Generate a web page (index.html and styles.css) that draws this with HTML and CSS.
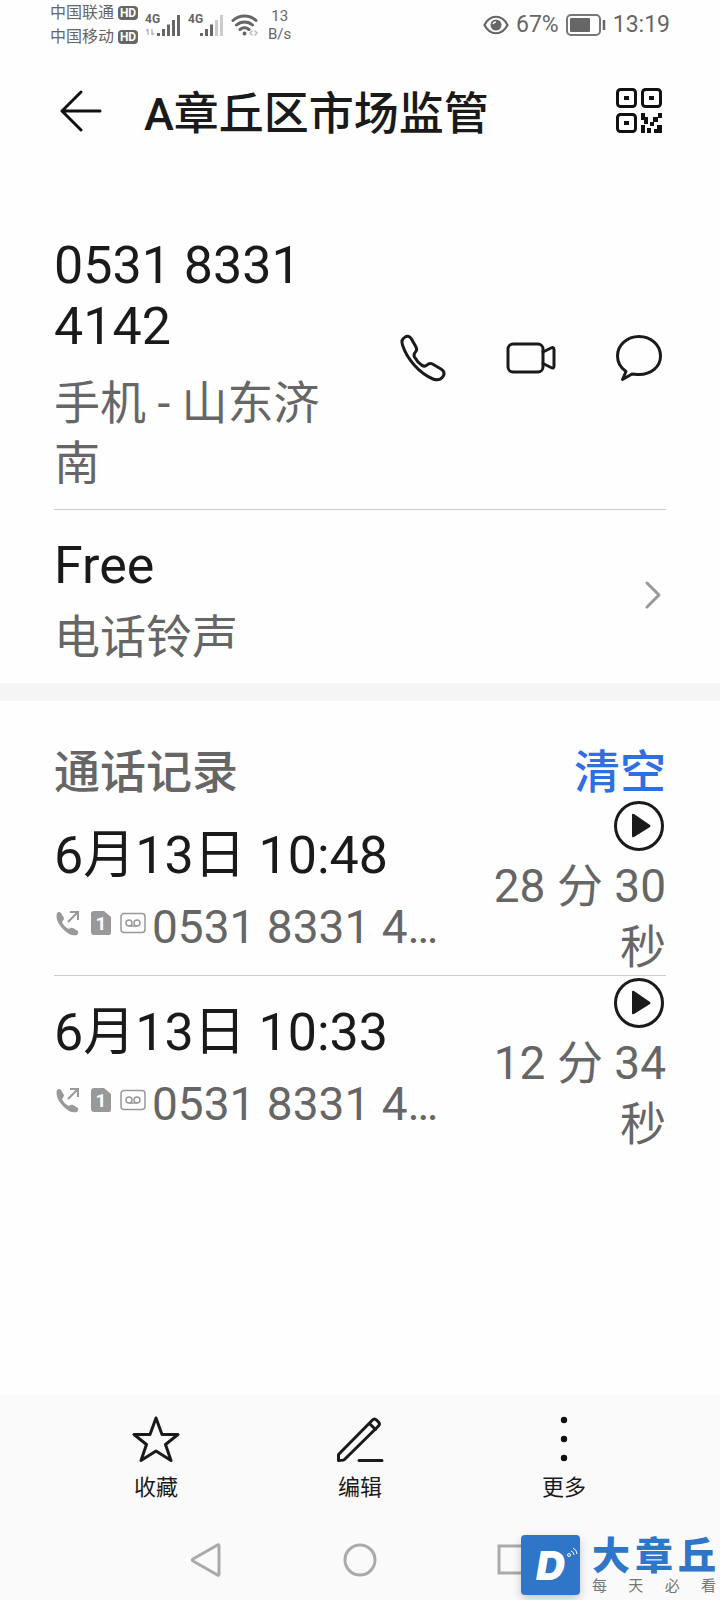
FILE: index.html
```html
<!DOCTYPE html>
<html lang="zh-CN">
<head>
  <meta charset="UTF-8">
  <meta name="viewport" content="width=device-width, initial-scale=1.0">
  <title>A章丘区市场监管</title>
  <link rel="stylesheet" href="styles.css">
</head>
<body>
  <div class="page">

    <div class="status-bar">
      <div class="carriers">
        <div class="carrier">中国联通 <span class="hd">HD</span></div>
        <div class="carrier">中国移动 <span class="hd">HD</span></div>
      </div>
      <svg class="signal" viewBox="0 0 36 26">
        <text x="0" y="11" class="net">4G</text>
        <path d="M3 17v6M1 19l2-2M7 23v-6M9 21l-2 2" stroke="#bbb" stroke-width="1.5" fill="none"/>
        <path d="M13.500 24v-3M18.500 24v-7M23.500 24V12.500M28.500 24V8M33.500 24V3" class="bar-on"/>
      </svg>
      <svg class="signal" viewBox="0 0 36 26">
        <text x="0" y="11" class="net">4G</text>
        <path d="M13.500 24v-3M18.500 24v-7M23.500 24V12.500" class="bar-on"/>
        <path d="M28.500 24V8M33.500 24V3" class="bar-off"/>
      </svg>
      <svg class="wifi" viewBox="0 0 28 26" fill="none" stroke="#666" stroke-width="3" stroke-linecap="round">
        <path d="M2 8.500a17 17 0 0 1 23 0M5.500 13a12 12 0 0 1 16 0M9 17.500a7 7 0 0 1 9 0"/>
        <circle cx="13.500" cy="21.500" r="1" fill="#666" stroke-width="2"/>
        <path d="M21 19l-2 2 2 2M24 19l2 2-2 2" stroke="#bbb" stroke-width="1.500"/>
      </svg>
      <div class="speed">13<br>B/s</div>
      <div class="status-right">
        <svg class="eye" viewBox="0 0 26 20">
          <path d="M1.500 10C7-1 19-1 24.500 10C19 21 7 21 1.500 10z" fill="none" stroke="#666" stroke-width="2.200"/>
          <circle cx="13" cy="10" r="5.500" fill="#666"/>
          <path d="M10 9a3 3 0 0 1 3-2" fill="none" stroke="#fff" stroke-width="1.500"/>
        </svg>
        <span>67%</span>
        <svg class="battery" viewBox="0 0 40 22">
          <rect x="1" y="1" width="33" height="20" rx="4" fill="none" stroke="#777" stroke-width="2"/>
          <rect x="4" y="4" width="20" height="14" rx="1" fill="#666"/>
          <path d="M38 6v10" stroke="#666" stroke-width="2.500"/>
        </svg>
        <span>13:19</span>
      </div>
    </div>

    <header class="title-bar">
      <button class="icon-button" aria-label="返回">
        <svg class="icon-back" viewBox="0 0 42 42">
          <path d="M21 2L2 21l19 19M2 21h38"/>
        </svg>
      </button>
      <h1>A章丘区市场监管</h1>
      <button class="icon-button" aria-label="二维码">
        <svg class="icon-qr" viewBox="0 0 54 54">
          <g fill="none" stroke="#111" stroke-width="3">
            <rect x="5.500" y="5.500" width="18" height="17" rx="3"/>
            <rect x="30.500" y="5.500" width="18" height="17" rx="3"/>
            <rect x="5.500" y="30.500" width="18" height="17" rx="3"/>
          </g>
          <path fill="#111" d="M12 12h5v4h-5zM37 12h5v4h-5zM12 37h5v4h-5zM29 29h4v4h3v7h-4v-4h-3zM46 29h4v5h-4zM41 33h5v5h-5zM38 38h4v4h-4zM45 41h5v8h-8v-4h3zM29 41h4v8h-4zM35 44h4v5h-4z"/>
        </svg>
      </button>
    </header>

    <main>
      <section class="contact">
        <div class="number-row">
          <div class="number-text">
            <div class="primary">0531 8331 4142</div>
            <div class="secondary">手机 - 山东济南</div>
          </div>
          <button class="icon-button" aria-label="拨打电话">
            <svg class="icon-line" viewBox="0 0 54 54">
              <path d="M10 5.500C7 7 5 10 6.500 14C11 28 23 42 37 48C41 49.500 45 48.500 47 45.500C49 42.500 48 40 45 38L36.500 33C34.500 32 32.500 32.500 31 34C29.500 35.500 27.500 35.500 25.500 34C22.500 32 20.500 29.500 18.500 26C17.500 24 18 22.500 19.500 21C21 19.500 21 18 20 16L15.500 8C14 5.500 12.500 4.500 10 5.500z"/>
            </svg>
          </button>
          <button class="icon-button" aria-label="视频通话">
            <svg class="icon-line" viewBox="0 0 54 54">
              <rect x="4" y="13" width="35" height="28" rx="5"/>
              <path d="M39 21l8-4q3-1.500 3 2v16q0 3-3 1.500l-8-4"/>
            </svg>
          </button>
          <button class="icon-button" aria-label="发短信">
            <svg class="icon-line" viewBox="0 0 54 54">
              <path d="M10.500 48.500L14 40.500C9 37 5.500 31.500 5.500 25C5.500 14 15 5.500 27 5.500S48.500 14 48.500 25S39 43.500 27 43.500C24 43.500 22 43 20 43z"/>
            </svg>
          </button>
        </div>
        <div class="ringtone-row">
          <div class="ringtone-text">
            <div class="primary">Free</div>
            <div class="secondary">电话铃声</div>
          </div>
          <svg class="chevron" viewBox="0 0 18 30"><path d="M3 3l12 12L3 27"/></svg>
        </div>
      </section>

      <section class="log">
        <div class="log-head">
          <h2>通话记录</h2>
          <button class="clear">清空</button>
        </div>
        <div class="call">
          <div class="call-info">
            <div class="primary">6月13日 10:48</div>
            <div class="call-line">
              <svg class="icon-call" viewBox="0 0 90 26">
                <path fill="#999" d="M1 3q2-2 4 0l3 5q0 2-2 4q2 5 7 7q2-2 4-1l5 3q1 2-1 4Q14 27 6 18Q-1 10 1 3z"/>
                <path d="M12 12L22 2M14 2h8v8" fill="none" stroke="#999" stroke-width="2"/>
                <path fill="#999" d="M38 1h10l7 6v16q0 2-2 2H38q-3 0-3-3V4q0-3 3-3z"/>
                <text x="45" y="20" class="sim">1</text>
                <g fill="none" stroke="#999" stroke-width="1.500">
                  <rect x="65" y="3.500" width="24" height="19" rx="3"/>
                  <circle cx="73" cy="13" r="3"/><circle cx="81" cy="13" r="3"/><path d="M73 16h8"/>
                </g>
              </svg>
              <span class="secondary call-number">0531 8331 4…</span>
            </div>
          </div>
          <div class="call-side">
            <button class="icon-button" aria-label="播放录音">
              <svg class="icon-play" viewBox="0 0 54 54"><circle cx="27" cy="27" r="23.500"/><path d="M20 16q0-2 2-1l16 11q1 1 0 2l-16 10q-2 1-2-1z"/></svg>
            </button>
            <div class="secondary">28 分 30 秒</div>
          </div>
        </div>
        <div class="call">
          <div class="call-info">
            <div class="primary">6月13日 10:33</div>
            <div class="call-line">
              <svg class="icon-call" viewBox="0 0 90 26">
                <path fill="#999" d="M1 3q2-2 4 0l3 5q0 2-2 4q2 5 7 7q2-2 4-1l5 3q1 2-1 4Q14 27 6 18Q-1 10 1 3z"/>
                <path d="M12 12L22 2M14 2h8v8" fill="none" stroke="#999" stroke-width="2"/>
                <path fill="#999" d="M38 1h10l7 6v16q0 2-2 2H38q-3 0-3-3V4q0-3 3-3z"/>
                <text x="45" y="20" class="sim">1</text>
                <g fill="none" stroke="#999" stroke-width="1.500">
                  <rect x="65" y="3.500" width="24" height="19" rx="3"/>
                  <circle cx="73" cy="13" r="3"/><circle cx="81" cy="13" r="3"/><path d="M73 16h8"/>
                </g>
              </svg>
              <span class="secondary call-number">0531 8331 4…</span>
            </div>
          </div>
          <div class="call-side">
            <button class="icon-button" aria-label="播放录音">
              <svg class="icon-play" viewBox="0 0 54 54"><circle cx="27" cy="27" r="23.500"/><path d="M20 16q0-2 2-1l16 11q1 1 0 2l-16 10q-2 1-2-1z"/></svg>
            </button>
            <div class="secondary">12 分 34 秒</div>
          </div>
        </div>
      </section>
    </main>

    <footer>
      <div class="actions">
        <button class="action">
          <svg class="icon-line" viewBox="0 0 54 54"><path d="M27 5l6 16.500h16L36.500 31.500l5.500 16L27 38L12 47.500L17.500 31.500L5 21.500H21z"/></svg>
          收藏
        </button>
        <button class="action">
          <svg class="icon-line" viewBox="0 0 54 54"><path d="M5.500 47.500v-6L39.500 7q2-2 4 0l2 2q2 2 0 4L12 46q-1 1.500-6.500 1.500zM36.500 10.500l6 6M26 47.500h23"/></svg>
          编辑
        </button>
        <button class="action">
          <svg class="icon-line" viewBox="0 0 54 54"><g fill="#111" stroke="none"><circle cx="27" cy="7" r="3.200"/><circle cx="27" cy="26" r="3.200"/><circle cx="27" cy="45" r="3.200"/></g></svg>
          更多
        </button>
      </div>
      <div class="nav">
        <button class="icon-button" aria-label="后退"><svg class="icon-nav" viewBox="0 0 36 36"><path d="M31 4v28q0 2-1.500 1L5 19q-1.500-1 0-2L29.500 3q1.500-1 1.500 1z"/></svg></button>
        <button class="icon-button" aria-label="主屏幕"><svg class="icon-nav" viewBox="0 0 36 36"><circle cx="18" cy="18" r="15"/></svg></button>
        <button class="icon-button" aria-label="最近任务"><svg class="icon-nav" viewBox="0 0 36 36"><rect x="3" y="4" width="28" height="27"/></svg></button>
      </div>
    </footer>

    <div class="brand">
      <div class="brand-logo">
        <span>D</span>
        <svg class="brand-wave" viewBox="0 0 12 12"><circle cx="3" cy="8" r="1.500"/><path d="M5 4q3 1 3 4M7 1q4 2 4 6"/></svg>
      </div>
      <div class="brand-text">
        <div class="brand-name"><span>大</span><span>章</span><span>丘</span></div>
        <div class="brand-tag"><span>每</span><span>天</span><span>必</span><span>看</span></div>
      </div>
    </div>
  </div>
</body>
</html>
```

FILE: styles.css
```css
* {
  box-sizing: border-box;
}

body {
  margin: 0;
  font-family: Roboto, "Noto Sans CJK SC", sans-serif;
  background-color: #fefefe;
  color: #1a1a1a;
}

.page {
  position: relative;
  display: flex;
  flex-direction: column;
  min-height: 100vh;
}

svg {
  display: block;
  flex: none;
}

button {
  margin: 0;
  padding: 0;
  border: none;
  background: none;
  color: inherit;
  font-family: inherit;
  cursor: pointer;
}

.icon-button {
  flex: none;
}

/* Status bar */
.status-bar {
  display: flex;
  align-items: center;
  height: 49px;
  padding: 0 50px;
  color: #666;
}

.carriers {
  margin-right: 7px;
}

.carrier {
  display: flex;
  align-items: center;
  gap: 4px;
  font-size: 16px;
  line-height: 24px;
}

.hd {
  width: 20px;
  border-radius: 4px;
  background-color: #666;
  color: #fff;
  font-size: 12px;
  font-weight: 700;
  line-height: 14px;
  text-align: center;
}

.signal {
  width: 36px;
  height: 26px;
  margin-right: 7px;
}

.net {
  font-size: 12px;
  font-weight: 700;
  fill: #666;
}

.bar-on {
  stroke: #666;
  stroke-width: 3;
}

.bar-off {
  stroke: #ccc;
  stroke-width: 3;
}

.wifi {
  width: 28px;
  height: 26px;
}

.speed {
  margin-left: 9px;
  font-size: 15px;
  line-height: 18px;
  text-align: center;
}

.status-right {
  display: flex;
  align-items: center;
  gap: 7px;
  margin-left: auto;
  font-size: 23px;
}

.eye {
  width: 26px;
  height: 20px;
}

.battery {
  width: 40px;
  height: 22px;
}

/* Title */
.title-bar {
  display: flex;
  align-items: center;
  height: 123px;
  padding: 0 54px 0 60px;
}

.title-bar h1 {
  flex: 1;
  margin: 0 0 0 42px;
  padding-top: 8px;
  font-size: 45px;
  font-weight: 500;
  line-height: 60px;
}

.icon-back {
  width: 42px;
  height: 42px;
  fill: none;
  stroke: #111;
  stroke-width: 3;
  stroke-linecap: round;
  stroke-linejoin: round;
}

.icon-qr,
.icon-line,
.icon-play {
  width: 54px;
  height: 54px;
}

.icon-line {
  fill: none;
  stroke: #1a1a1a;
  stroke-width: 3;
  stroke-linecap: round;
  stroke-linejoin: round;
}

.primary {
  font-size: 52px;
  line-height: 61px;
}

.secondary {
  color: #666;
  font-size: 46px;
  line-height: 60px;
}

/* Contact */
.contact {
  padding: 51px 54px 0;
  border-bottom: 18px solid #f5f5f5;
}

.number-row {
  display: flex;
  align-items: center;
  gap: 54px;
  padding-bottom: 16px;
  border-bottom: 1px solid #ccc;
}

.number-text {
  flex: 1;
  padding-top: 12px;
}

.number-text .secondary {
  margin-top: 16px;
}

.ringtone-row {
  display: flex;
  align-items: center;
  justify-content: space-between;
  padding: 13px 4px 16px 0;
}

.ringtone-text {
  padding-top: 12px;
}

.ringtone-text .secondary {
  margin-top: 11px;
}

.chevron {
  width: 18px;
  height: 30px;
  fill: none;
  stroke: #999;
  stroke-width: 3;
  stroke-linecap: round;
  stroke-linejoin: round;
}

/* Call log */
.log {
  padding: 45px 54px 0;
}

.log-head {
  display: flex;
  justify-content: space-between;
  padding-bottom: 1px;
}

.log-head h2 {
  margin: 0;
  color: #666;
  font-size: 46px;
  font-weight: 500;
  line-height: 52px;
}

.clear {
  color: #2f6fe4;
  font-size: 46px;
  font-weight: 500;
  line-height: 52px;
}

.call {
  display: flex;
  align-items: center;
  gap: 16px;
  border-bottom: 1px solid #ccc;
}

.call:last-child {
  border-bottom: none;
}

.call-info {
  flex: 1;
  min-width: 0;
  padding-top: 8px;
}

.call-line {
  display: flex;
  align-items: flex-start;
  gap: 6px;
  margin-top: 11px;
  padding-left: 2px;
}

.icon-call {
  width: 90px;
  height: 26px;
  margin-top: 13px;
}

.sim {
  fill: #fff;
  font-size: 19px;
  font-weight: 700;
  text-anchor: middle;
}

.call-number {
  white-space: nowrap;
}

.call-side {
  width: 200px;
  text-align: right;
}

.call-side .icon-button {
  display: block;
  margin-left: auto;
}

.call-side .secondary {
  margin: 3px 0 -3px;
  line-height: 61px;
}

.icon-play circle {
  fill: none;
  stroke: #1a1a1a;
  stroke-width: 3;
}

.icon-play path {
  fill: #1a1a1a;
}

/* Bottom */
footer {
  margin-top: auto;
  background-color: #fafafa;
}

.actions {
  display: flex;
  padding: 18px 54px 0;
}

.action {
  display: flex;
  flex: 1;
  flex-direction: column;
  align-items: center;
  font-size: 22px;
  line-height: 42px;
}

.nav {
  display: flex;
  justify-content: space-around;
  padding: 33px 18% 22px;
}

.icon-nav {
  width: 36px;
  height: 36px;
  fill: none;
  stroke: #aaa;
  stroke-width: 3;
}

/* Floating brand mark */
.brand {
  position: absolute;
  right: 4px;
  bottom: 5px;
  display: flex;
  gap: 12px;
  color: #2f76c8;
}

.brand-logo {
  position: relative;
  width: 59px;
  height: 60px;
  border-radius: 4px;
  background-color: #2f76c8;
  box-shadow: 0 4px 10px rgba(0, 0, 0, 0.2);
  color: #fff;
  font-family: Inter, sans-serif;
  font-size: 40px;
  font-style: italic;
  font-weight: 900;
  line-height: 62px;
  text-align: center;
}

.brand-wave {
  position: absolute;
  top: 12px;
  right: 2px;
  width: 12px;
  height: 12px;
  fill: none;
  stroke: #fff;
}

.brand-text {
  width: 124px;
}

.brand-name,
.brand-tag {
  display: flex;
  justify-content: space-between;
}

.brand-name {
  font-size: 38px;
  font-weight: 900;
  line-height: 42px;
}

.brand-tag {
  color: #777;
  font-size: 15px;
  line-height: 18px;
}
```
